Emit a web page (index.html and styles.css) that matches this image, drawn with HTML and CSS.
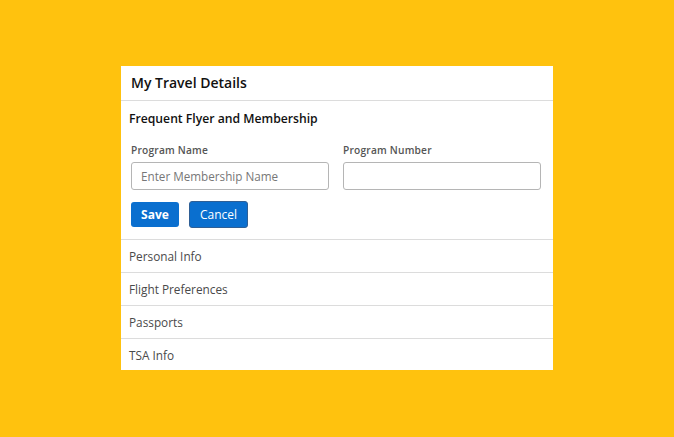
FILE: index.html
```html
<!DOCTYPE html>
<html>
<head>
<meta charset="utf-8">
<link rel="stylesheet" href="styles.css">
</head>
<body>
<div class="panel">
  <div class="panel-header">My Travel Details</div>
  <div class="section">
    <div class="section-title">Frequent Flyer and Membership</div>
    <div class="form-grid">
      <div class="field">
        <label class="label">Program Name</label>
        <input class="input" type="text" placeholder="Enter Membership Name">
      </div>
      <div class="field">
        <label class="label">Program Number</label>
        <input class="input" type="text">
      </div>
    </div>
    <div class="actions">
      <button class="btn btn-save">Save</button>
      <button class="btn btn-cancel">Cancel</button>
    </div>
  </div>
  <div class="list-item">Personal Info</div>
  <div class="list-item">Flight Preferences</div>
  <div class="list-item">Passports</div>
  <div class="list-item last">TSA Info</div>
</div>
</body>
</html>
```
FILE: styles.css
```css
html, body {
  margin: 0;
  padding: 0;
}
body {
  background: #ffc20e;
  width: 674px;
  height: 437px;
  font-family: "Open Sans", "Noto Sans", sans-serif;
  overflow: hidden;
}
.panel {
  margin: 66px 0 0 121px;
  width: 432px;
  background: #fff;
}
.panel-header {
  height: 34px;
  line-height: 33px;
  padding-left: 10px;
  font-size: 14px;
  font-weight: 600;
  color: #111;
  border-bottom: 1px solid #dcdcdc;
}
.section {
  padding: 9px 13px 11px 8px;
  border-bottom: 1px solid #dcdcdc;
}
.section-title {
  font-size: 12.2px;
  font-weight: 600;
  color: #111;
  line-height: 18px;
}
.form-grid {
  display: grid;
  grid-template-columns: 198px 198px;
  column-gap: 14px;
  margin-top: 15px;
  padding-left: 2px;
}
.field {
  display: flex;
  flex-direction: column;
}
.label {
  font-size: 10.2px;
  font-weight: 600;
  color: #555;
  line-height: 14px;
  letter-spacing: 0.2px;
}
.input {
  margin-top: 5px;
  height: 28px;
  box-sizing: border-box;
  border: 1px solid #b5b5b5;
  border-radius: 3px;
  padding: 0 9px;
  font-family: inherit;
  font-size: 11.7px;
  color: #333;
  background: #fff;
}
.input::placeholder {
  color: #777;
}
.actions {
  display: flex;
  align-items: center;
  gap: 10px;
  margin-top: 11px;
  padding-left: 2px;
}
.btn {
  font-family: inherit;
  color: #fff;
  background: #0a6fcf;
  border-radius: 3px;
  font-size: 12px;
  cursor: pointer;
  box-sizing: border-box;
}
.btn-save {
  height: 25px;
  width: 48px;
  border: none;
  font-weight: 700;
}
.btn-cancel {
  height: 27px;
  width: 59px;
  border: 1px solid #2f5f95;
  font-weight: 400;
}
.list-item {
  height: 32px;
  line-height: 33px;
  padding-left: 8px;
  font-size: 11.8px;
  color: #4a4a4a;
  border-bottom: 1px solid #dcdcdc;
}
.list-item.last {
  border-bottom: none;
  height: 31px;
}
```
